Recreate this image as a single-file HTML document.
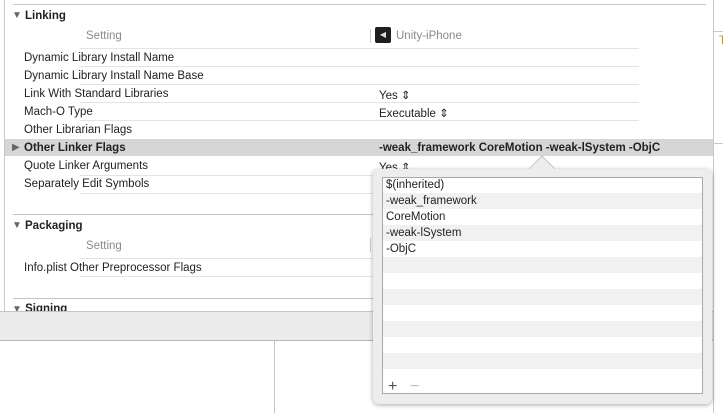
<!DOCTYPE html>
<html><head><style>
*{margin:0;padding:0;box-sizing:border-box}
body{width:723px;height:413px;overflow:hidden;background:#fff;position:relative;font-family:"Liberation Sans",Helvetica,sans-serif;font-size:11.5px;color:#222}
.a{position:absolute;white-space:nowrap}
.t{margin-top:1px}
.l{position:absolute;height:1px;background:#e4e4e4}
.b{font-weight:bold}
.g{color:#8a8a8a}
.tri{font-size:10px;color:#666}
</style></head><body>
<div class="a" style="left:4px;top:0;width:1px;height:311px;background:#c8c8c8"></div>
<div class="l" style="left:13px;top:4px;width:693px;background:#c4c4c4"></div>
<div class="a" style="left:713px;top:0;width:1px;height:413px;background:#c8c8c8"></div>
<div class="l" style="left:714px;top:31px;width:9px;background:#c8c8c8"></div>
<div class="a" style="left:719px;top:35px;color:#d08a20">T</div>
<div class="l" style="left:714px;top:143px;width:9px;background:#c8c8c8"></div>

<div class="a tri" style="left:12px;top:10px">▼</div>
<div class="a b" style="left:25px;top:10px">Linking</div>
<div class="a g" style="left:86px;top:30px">Setting</div>
<div class="a" style="left:370px;top:29px;width:1px;height:14px;background:#ccc"></div>
<div class="a" style="left:375px;top:27px;width:16px;height:16px;background:#1e1e1e;border-radius:2px;color:#ddd;font-size:8px;text-align:center;line-height:16px">◀</div>
<div class="a g" style="left:396px;top:30px">Unity-iPhone</div>

<div class="l" style="left:80px;top:48px;width:559px"></div>
<div class="a" style="left:24px;top:52px">Dynamic Library Install Name</div>
<div class="l" style="left:80px;top:66px;width:559px"></div>
<div class="a" style="left:24px;top:70px">Dynamic Library Install Name Base</div>
<div class="l" style="left:80px;top:84px;width:559px"></div>
<div class="a" style="left:24px;top:88px">Link With Standard Libraries</div>
<div class="a" style="left:379px;top:88px">Yes ⇕</div>
<div class="l" style="left:80px;top:102px;width:559px"></div>
<div class="a" style="left:24px;top:106px">Mach-O Type</div>
<div class="a" style="left:379px;top:106px">Executable ⇕</div>
<div class="l" style="left:80px;top:120px;width:559px"></div>
<div class="a" style="left:24px;top:124px">Other Librarian Flags</div>
<div class="a" style="left:5px;top:139px;width:708px;height:17px;background:#d6d6d6"></div>
<div class="a tri" style="left:12px;top:142px">▶</div>
<div class="a b" style="left:24px;top:142px">Other Linker Flags</div>
<div class="a b" style="left:379px;top:142px">-weak_framework CoreMotion -weak-lSystem -ObjC</div>
<div class="a" style="left:24px;top:160px">Quote Linker Arguments</div>
<div class="a" style="left:379px;top:160px">Yes ⇕</div>
<div class="l" style="left:80px;top:175px;width:559px"></div>
<div class="a" style="left:24px;top:178px">Separately Edit Symbols</div>
<div class="l" style="left:80px;top:193px;width:559px"></div>

<div class="l" style="left:13px;top:214px;width:400px;background:#c4c4c4"></div>
<div class="a tri" style="left:12px;top:220px">▼</div>
<div class="a b" style="left:25px;top:220px">Packaging</div>
<div class="a g" style="left:86px;top:240px">Setting</div>
<div class="a" style="left:370px;top:238px;width:1px;height:14px;background:#ccc"></div>
<div class="l" style="left:80px;top:258px;width:300px"></div>
<div class="a" style="left:24px;top:262px">Info.plist Other Preprocessor Flags</div>
<div class="l" style="left:80px;top:276px;width:300px"></div>
<div class="l" style="left:13px;top:298px;width:400px;background:#c4c4c4"></div>
<div class="a" style="left:12px;top:303px;height:8px;overflow:hidden"><span class="tri">▼</span> <b>Signing</b></div>

<div class="a" style="left:0;top:311px;width:713px;height:30px;background:#ececec;border-top:1px solid #c4c4c4;border-bottom:1px solid #b8b8b8"></div>
<div class="a" style="left:274px;top:341px;width:1px;height:72px;background:#c4c4c4"></div>

<div class="a" style="left:373px;top:169px;width:339px;height:235px;background:#ededed;border-radius:6px;box-shadow:0 1px 5px rgba(0,0,0,.35)"></div>
<svg class="a" style="left:528px;top:155px" width="30" height="16"><path d="M0 15 L14 1 L28 15 Z" fill="#ededed" stroke="#c8c8c8"/><rect x="0" y="14" width="30" height="3" fill="#ededed"/></svg>
<div class="a" style="left:382px;top:177px;width:321px;height:217px;background:#fff;border:1px solid #a8a8a8"></div>
<div class="a" style="left:383px;top:193px;width:319px;height:16px;background:#f1f1f1"></div>
<div class="a" style="left:383px;top:225px;width:319px;height:16px;background:#f1f1f1"></div>
<div class="a" style="left:383px;top:257px;width:319px;height:16px;background:#f1f1f1"></div>
<div class="a" style="left:383px;top:289px;width:319px;height:16px;background:#f1f1f1"></div>
<div class="a" style="left:383px;top:321px;width:319px;height:16px;background:#f1f1f1"></div>
<div class="a" style="left:383px;top:353px;width:319px;height:16px;background:#f1f1f1"></div>
<div class="a" style="left:386px;top:179px">$(inherited)</div>
<div class="a" style="left:386px;top:195px">-weak_framework</div>
<div class="a" style="left:386px;top:211px">CoreMotion</div>
<div class="a" style="left:386px;top:227px">-weak-lSystem</div>
<div class="a" style="left:386px;top:243px">-ObjC</div>
<div class="a" style="left:388px;top:378px;font-size:16px;color:#555">+</div>
<div class="a" style="left:410px;top:378px;font-size:16px;color:#bbb">−</div>
</body></html>
